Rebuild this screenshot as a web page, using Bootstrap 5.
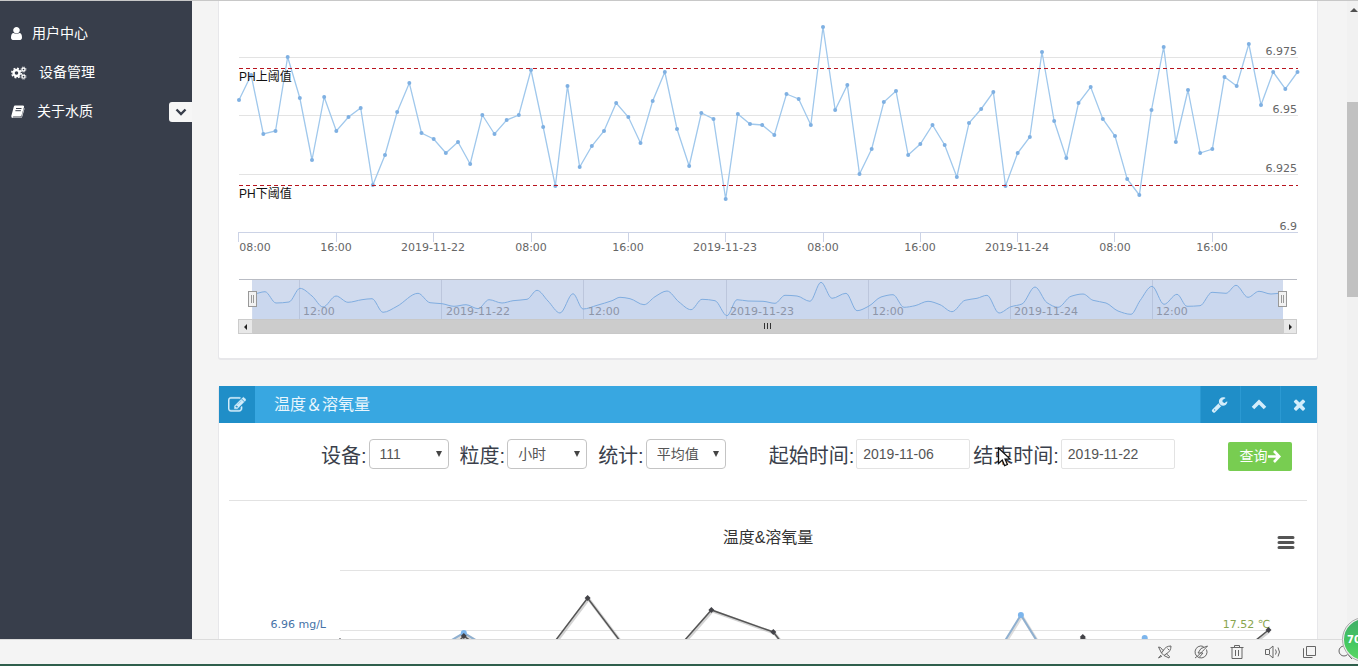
<!DOCTYPE html>
<html lang="zh-CN">
<head>
<meta charset="utf-8">
<meta name="viewport" content="width=device-width, initial-scale=1">
<title>水质监测</title>
<link rel="stylesheet" href="https://cdn.jsdelivr.net/npm/bootstrap@5.3.0/dist/css/bootstrap.min.css">
<style>
  body { font-family: "Liberation Sans", "Noto Sans CJK SC", sans-serif; font-size: 14px; background: #f4f4f4; color: #3a3f4b; border-top: 1px solid #c8c8c8; }
  svg { display: block; }
  .side { width: 192px; background: #383e4b; padding-top: 13px; }
  .side a { height: 39px; padding-left: 11px; gap: 10px; color: #fff; }
  .side-toggle { right: 0; top: 101px; width: 23px; height: 20px; background: #f6f6f6; border-radius: 3px 0 0 3px; color: #383e4b; }
  .pane { padding: 0 29px 0 26px; }
  .panel-box { border: 1px solid #e7e7ea; border-bottom-width: 2px; border-radius: 3px; background: #fff; }
  .panel-first { border-top: 0; border-top-left-radius: 0; border-top-right-radius: 0; margin-bottom: 26px; }
  .panel-bar { height: 37px; background: #38a7e1; color: #e9f6fd; border-radius: 2px 2px 0 0; font-size: 16px; }
  .panel-bar .tile { height: 37px; background: #1f8ec8; color: #d3edfb; }
  .panel-bar .lead-tile { width: 36px; }
  .panel-bar button.tile { width: 40px; padding: 0 3px 0 0; border-left: 1px solid #2b99d2; }
  .panel-bar button.tile:last-child { width: 37px; padding: 0; }
  .panel-title-text { padding-left: 19px; }
  .query { padding: 16px 25px 29px 102px; }
  .query label { font-size: 20px; line-height: 30px; padding: 2px 2px 0 0; white-space: nowrap; }
  .query .form-select { width: 80px; height: 30px; padding: 0 10px; font-size: 14px; color: #555; border-color: #c4c4c4; border-radius: 4px;
    background-image: url("data:image/svg+xml,%3Csvg xmlns='http://www.w3.org/2000/svg' viewBox='0 0 8 8'%3E%3Cpath d='M1 1h6L4 7z' fill='%23444'/%3E%3C/svg%3E"); background-size: 8px 8px; background-position: right 5px center; }
  .query .form-control { width: 114px; height: 30px; padding: 0 6px; font-size: 14px; color: #555; border-color: #e3e3e3; border-radius: 2px; }
  .btn-query { height: 29px; width: 64px; background: #78cd51; color: #fff; border-radius: 2px; font-size: 14px; margin-top: 3px; }
  .gap-wide { margin-left: 43px; }
  .gap-mid { margin-left: 11px; }
  .gap-thin { margin-left: 3px; }
  .rule { height: 1px; background: #e2e2e2; margin: 0 10px; }
  .pointer { left: 24px; top: 8px; }
  .menu-btn { right: 22px; top: 33px; width: 18px; height: 18px; }
  .axis { font: 11px "DejaVu Sans", "Noto Sans CJK SC", sans-serif; fill: #666; }
  .nav-axis { fill: #8d95a8; }
  .limit { font-size: 12px; fill: #111; }
  .scroll-track { width: 11px; background: #f1f1f1; }
  .scroll-thumb { margin-top: 85px; height: 195px; background: #c1c1c1; }
  .status { height: 27px; border-top: 1px solid #dcdcdc; border-bottom: 2px solid #2f5f4c; background: #f4f4f4; padding-right: 5px; gap: 20px; color: #666; }
  .status svg { fill: none; stroke: currentColor; }
  .ball { right: -29px; bottom: 4px; width: 45px; height: 45px; border-radius: 50%; border: 2px solid #eee; outline: 1px solid #aaa; outline-offset: -1px; background: linear-gradient(#3fae68, #45c860 60%, #5bd765); color: #fff; font: bold 10px "DejaVu Sans", sans-serif; padding-left: 3px; }
</style>
</head>
<body class="vh-100 overflow-hidden d-flex flex-column position-relative">
<div class="d-flex flex-grow-1 overflow-hidden">
  <nav class="side flex-shrink-0 position-relative">
    <a href="#" class="d-flex align-items-center text-decoration-none">
      <svg width="11" height="13" viewBox="256 128 1280 1536" preserveAspectRatio="none" fill="currentColor"><path d="M1536 1399q0 109-62.500 187t-150.500 78h-854q-88 0-150.500-78t-62.500-187q0-85 8.500-160.500t31.500-152 58.500-131 94-89 134.500-34.500q131 128 313 128t313-128q76 0 134.500 34.500t94 89 58.500 131 31.500 152 8.500 160.500zm-256-887q0 159-112.500 271.500t-271.500 112.500-271.500-112.500-112.500-271.500 112.500-271.500 271.500-112.500 271.500 112.500 112.500 271.500z"/></svg>
      用户中心</a>
    <a href="#" class="d-flex align-items-center text-decoration-none">
      <svg width="18" height="14" viewBox="1 0 18 14" fill="none" stroke="currentColor"><circle cx="6.500" cy="7" r="3" stroke-width="2.400"/><circle cx="6.500" cy="7" r="4.700" stroke-width="1.600" stroke-dasharray="1.900 1.790"/><circle cx="13.500" cy="3.500" r="1.500" stroke-width="1.300"/><circle cx="13.500" cy="3.500" r="2.500" stroke-width=".9" stroke-dasharray="1 .96"/><circle cx="13.500" cy="10.700" r="1.500" stroke-width="1.300"/><circle cx="13.500" cy="10.700" r="2.500" stroke-width=".9" stroke-dasharray="1 .96"/></svg>
      设备管理</a>
    <a href="#" class="d-flex align-items-center text-decoration-none">
      <svg width="16" height="13" viewBox="0 0 16 13"><path d="M4 .5h8q1.500 0 1 1.500l-2.500 8.500q-.3 1-1.500 1H2.500q-.8 0-.7.500.1.500.9.500h7.600L13.200 3q.5.500.2 1.300L11 12.200q-.3.800-1.200.8H2q-2-.2-1.700-2L2.800 1.800Q3.200.5 4 .5z" fill="#fff"/><path d="M5 3.500h5.500M4.400 5.700h5.500" stroke="#383e4b"/></svg>
      关于水质</a>
    <button type="button" class="side-toggle btn border-0 p-0 position-absolute d-flex align-items-center justify-content-center" aria-label="展开">
      <svg width="12" height="8" viewBox="0 0 12 8" fill="none" stroke="currentColor" stroke-width="2.400"><path d="M1.500 1.500 6 6l4.500-4.500"/></svg>
    </button>
  </nav>

  <main class="pane flex-grow-1 overflow-hidden">
    <section class="panel-box panel-first">
      <svg class="w-100" viewBox="219 1 1098 357" id="ph">
        <path d="M239 57.500H1298M239 115.500H1298M239 174.500H1298" stroke="#e3e3e3"/>
        <path d="M238 232.500H1298M238.500 232v10M336.500 232v10M433.500 232v10M531.500 232v10M628.500 232v10M725.500 232v10M823.500 232v10M920.500 232v10M1017.500 232v10M1114.500 232v10M1212.500 232v10" stroke="#ccd3e6" fill="none"/>
        <g id="phSeries"></g>
        <path d="M239 68.500H1298" stroke="#b8141e" stroke-dasharray="4 3"/>
        <path d="M239 185.500H1298" stroke="#b8141e" stroke-dasharray="4 3"/>
        <text class="limit" x="239" y="81">PH上阈值</text>
        <text class="limit" x="239" y="198">PH下阈值</text>
        <g class="axis" text-anchor="end"><text x="1297" y="55">6.975</text><text x="1297" y="113">6.95</text><text x="1297" y="172">6.925</text><text x="1297" y="230">6.9</text></g>
        <g class="axis" text-anchor="middle"><text x="255" y="251">08:00</text><text x="336" y="251">16:00</text><text x="433" y="251">2019-11-22</text><text x="531" y="251">08:00</text><text x="628" y="251">16:00</text><text x="725" y="251">2019-11-23</text><text x="823" y="251">08:00</text><text x="920" y="251">16:00</text><text x="1017" y="251">2019-11-24</text><text x="1115" y="251">08:00</text><text x="1212" y="251">16:00</text></g>
        <rect x="252" y="280" width="1031" height="39" fill="#d1dbee"/>
        <path d="M299.500 280v39M441.500 280v39M583.500 280v39M726.500 280v39M868.500 280v39M1010.500 280v39M1152.500 280v39" stroke="#bcc6dc"/>
        <g id="navSeries"></g>
        <g class="axis nav-axis"><text x="303" y="315">12:00</text><text x="446" y="315">2019-11-22</text><text x="588" y="315">12:00</text><text x="730" y="315">2019-11-23</text><text x="872" y="315">12:00</text><text x="1014" y="315">2019-11-24</text><text x="1156" y="315">12:00</text></g>
        <path d="M239 279.500H1297" stroke="#b9bcc4"/>
        <rect x="238.500" y="319.500" width="1058" height="14" fill="#ccc" stroke="#c8c8c8"/>
        <rect x="238.500" y="319.500" width="14" height="14" fill="#e8e8e8" stroke="#ccc"/>
        <rect x="1283.500" y="319.500" width="13" height="14" fill="#e8e8e8" stroke="#ccc"/>
        <path d="M247 324v6l-3-3zM1289 324v6l3-3z" fill="#222"/>
        <path d="M764.500 323v6M767.500 323v6M770.500 323v6" stroke="#333"/>
        <g fill="#f2f2f2" stroke="#999"><rect x="248.500" y="291.500" width="8" height="15"/><rect x="1278.500" y="291.500" width="8" height="15"/><path d="M251.500 295v8M253.500 295v8M1281.500 295v8M1283.500 295v8"/></g>
      </svg>
    </section>

    <section class="panel-box border-top-0">
      <div class="panel-bar d-flex align-items-center">
        <span class="tile lead-tile d-flex align-items-center justify-content-center">
          <svg width="18" height="18" viewBox="0 0 1792 1792" fill="currentColor" stroke="currentColor" stroke-width="40"><path d="M888 1184l116-116-152-152-116 116v56h96v96h56zm440-720q-16-16-33 1l-350 350q-17 17-1 33t33-1l350-350q17-17 1-33zm80 594v190q0 119-84.500 203.500t-203.500 84.500h-832q-119 0-203.500-84.500t-84.500-203.500v-832q0-119 84.500-203.500t203.500-84.500h832q63 0 117 25 15 7 18 23 3 17-9 29l-49 49q-14 14-32 8-23-6-45-6h-832q-66 0-113 47t-47 113v832q0 66 47 113t113 47h832q66 0 113-47t47-113v-126q0-13 9-22l64-64q15-15 35-7t20 29zm-96-738l288 288-672 672h-288v-288zm444 132l-92 92-288-288 92-92q28-28 68-28t68 28l152 152q28 28 28 68t-28 68z"/></svg>
        </span>
        <span class="panel-title-text me-auto">温度＆溶氧量</span>
        <button type="button" class="tile btn border-top-0 border-end-0 border-bottom-0 rounded-0 d-flex align-items-center justify-content-center" aria-label="设置"><svg width="17" height="17" viewBox="0 0 1792 1792" fill="currentColor"><path d="M448 1472q0-26-19-45t-45-19-45 19-19 45 19 45 45 19 45-19 19-45zm644-420l-682 682q-37 37-90 37-52 0-91-37l-106-108q-38-36-38-90 0-53 38-91l681-681q39 98 114.500 173.500t173.500 114.500zm634-435q0 39-23 106-47 134-164.500 217.500t-258.500 83.500q-185 0-316.500-131.500t-131.500-316.500 131.500-316.500 316.500-131.500q58 0 121.500 16.500t107.500 46.500q16 11 16 28t-16 28l-293 169v224l193 107q5-3 79-48.500t135.500-81 70.500-35.500q15 0 23.500 10t8.500 25z"/></svg></button>
        <button type="button" class="tile btn border-top-0 border-end-0 border-bottom-0 rounded-0 d-flex align-items-center justify-content-center" aria-label="收起"><svg width="16" height="11" viewBox="0 0 16 11" fill="none" stroke="currentColor" stroke-width="3.600"><path d="M2 9l6-6 6 6"/></svg></button>
        <button type="button" class="tile btn border-top-0 border-end-0 border-bottom-0 rounded-0 d-flex align-items-center justify-content-center" aria-label="关闭"><svg width="17" height="17" viewBox="0 0 1792 1792" fill="currentColor"><path d="M1490 1322q0 40-28 68l-136 136q-28 28-68 28t-68-28l-294-294-294 294q-28 28-68 28t-68-28l-136-136q-28-28-28-68t28-68l294-294-294-294q-28-28-28-68t28-68l136-136q28-28 68-28t68 28l294 294 294-294q28-28 68-28t68 28l136 136q28 28 28 68t-28 68l-294 294 294 294q28 28 28 68z"/></svg></button>
      </div>
      <form class="query d-flex align-items-start" onsubmit="return false">
        <label for="dev">设备:</label>
        <select id="dev" class="form-select"><option>111</option></select>
        <label for="gran" class="gap-mid">粒度:</label>
        <select id="gran" class="form-select"><option>小时</option></select>
        <label for="stat" class="gap-mid">统计:</label>
        <select id="stat" class="form-select"><option>平均值</option></select>
        <label for="from" class="gap-wide">起始时间:</label>
        <input id="from" class="form-control" type="text" value="2019-11-06">
        <label for="to" class="gap-thin position-relative">结束时间:
          <svg class="pointer position-absolute" width="15" height="20" viewBox="0 0 15 20"><path d="M1.500 1v15.500l3.800-3.400 2.300 5.600 2.800-1.200-2.300-5.400h5z" fill="#fff" stroke="#111" stroke-width="1.300"/></svg>
        </label>
        <input id="to" class="form-control" type="text" value="2019-11-22">
        <button type="submit" class="btn btn-query border-0 p-0 ms-auto d-flex align-items-center justify-content-center">查询<svg width="13" height="13" viewBox="0 0 13 13" fill="none" stroke="currentColor" stroke-width="2.600"><path d="M0 6.500h11M6 1l5.300 5.500L6 12"/></svg></button>
      </form>
      <div class="rule"></div>
      <div class="position-relative">
        <svg class="w-100" viewBox="219 501 1098 160">
          <path d="M340 570.500H1270M340 630.500H1270" stroke="#e3e3e3"/>
          <text x="768" y="543" text-anchor="middle" font-size="16" fill="#333">温度&amp;溶氧量</text>
          <text class="axis" x="326" y="628" text-anchor="end" style="fill:#4572a7">6.96 mg/L</text>
          <text class="axis" x="1270" y="628" text-anchor="end" style="fill:#89a54e">17.52 ℃</text>
          <g id="mixSeries"></g>
        </svg>
        <button type="button" class="menu-btn btn border-0 p-0 position-absolute" aria-label="图表菜单"><svg width="18" height="18" viewBox="0 0 18 18" stroke="#555" stroke-width="3" stroke-linecap="round"><path d="M2 3.500h14M2 8.500h14M2 13.500h14"/></svg></button>
      </div>
    </section>
  </main>

  <div class="scroll-track flex-shrink-0">
    <svg width="11" height="16" viewBox="0 0 11 16"><path d="M3 11h8L7 7z" fill="#505050"/></svg>
    <div class="scroll-thumb"></div>
  </div>
</div>

<footer class="status flex-shrink-0 d-flex align-items-center justify-content-end">
  <svg width="16" height="16" viewBox="0 0 16 16"><path d="M14 2Q8.500 2 6 7L4.500 9l2.500 2.500L9 10q5-2.500 5-8zM6 6.500 3.500 3.500 1.500 3 4.500 9M9.500 10l3 2.500-.5 1.500L7 11.500M4 11l-2.500 3L5 12M10.500 4.500l1.500 1.500"/></svg>
  <svg width="16" height="16" viewBox="0 0 16 16"><path d="M13.500 5.500A6 6 0 1 1 10.500 2.500M2 14C5 12 10 7 14.500 2L8 4.500 5 9h5l-3.500 4"/></svg>
  <svg width="16" height="16" viewBox="0 0 16 16"><path d="M1.500 3.500h13M5.500 3.500v-2h5v2M3 3.500v11h10v-11M6.500 6v6M9.500 6v6"/></svg>
  <svg width="16" height="16" viewBox="0 0 16 16"><path d="M.5 5.500H4L8 2v12l-4-3.500H.5zM4.500 6v4M10.500 5.500q1.700 2.500 0 5M13 3.500q3 4.500 0 9"/></svg>
  <svg width="16" height="16" viewBox="0 0 16 16"><path d="M5.500 2.500h9v9h-9zM3 4.500H2.500v9h9"/></svg>
  <svg width="16" height="16" viewBox="0 0 16 16"><circle cx="7" cy="7" r="5"/><path d="M11 11l4 4"/></svg>
</footer>
<div class="ball position-absolute d-flex align-items-center">70</div>

<script src="https://cdn.jsdelivr.net/npm/bootstrap@5.3.0/dist/js/bootstrap.bundle.min.js"></script>
<script>
  // hourly PH readings, in chart units
  const ph = [100,75,134,131,57,98,160,97,131,117,108,185,155,112,83,133,139,153,142,164,115,134,120,115,70,127,186,86,167,146,131,103,117,143,101,72,129,166,113,119,199,114,124,125,135,94,99,125,27,110,85,174,149,102,91,155,144,125,145,177,123,109,92,186,153,137,52,121,158,103,87,119,136,179,195,110,47,142,90,153,149,77,86,44,105,72,89,72]
    .map((y, i) => [239 + 1058.5 * i / 87, y]);
  const line = p => 'M' + p.map(q => q.join(' ')).join('L');
  const put = (id, html) => { document.getElementById(id).innerHTML = html; };
  put('phSeries', `<path d="${line(ph)}" fill="none" stroke="#a0c8ec" stroke-width="1.300"/>` +
    ph.map(q => `<circle cx="${q[0]}" cy="${q[1]}" r="2" fill="#7fb0e2"/>`).join(''));

  // overview curve: flat tangents at the peaks, averaged slopes elsewhere
  const nav = [[253,294],[265,291.7],[276,303],[289,302],[300,288.3],[312,296],[323,307],[336,296],[348,302.3],[362,299.7],[372,298.7],[383,312.3],[397,306.3],[418,293.3],[430,302.7],[442,303.7],[454,306.3],[466,304.7],[478,308.7],[489,299.7],[502,303],[513,300.7],[527,299.3],[537,290.3],[548,301],[560,313],[573,293.7],[583,309],[597,305.3],[612,300.7],[620,297.3],[630,298.7],[644,304.7],[655,296.7],[667,291],[679,302],[691,309.7],[702,299.3],[715,300.7],[727,315.7],[737,299.7],[748,301],[763,301.3],[775,303.3],[785,295.3],[797,296],[810,301.3],[821,282.3],[832,298.3],[846,293.3],[857,310.7],[869,306],[881,297],[893,294.7],[904,307.3],[915,305.7],[928,301.3],[940,304.7],[952,311.7],[965,300.3],[977,298.3],[987,295.3],[999,313],[1011,306.7],[1022,304],[1035,287],[1047,302.7],[1058,307.3],[1071,296.3],[1083,294],[1093,300.3],[1106,303],[1118,311],[1131,314.3],[1140,300.7],[1152,286.3],[1164,304.3],[1177,294.3],[1187,306.3],[1200,305.7],[1212,292.3],[1226,293.3],[1236,285.3],[1248,297.3],[1259,291.3],[1271,294],[1283,293]];
  const slope = nav.map((q, i) => {
    if (!i || i === nav.length - 1) return 0;
    const a = (q[1] - nav[i-1][1]) / (q[0] - nav[i-1][0]), b = (nav[i+1][1] - q[1]) / (nav[i+1][0] - q[0]);
    return a * b <= 0 ? 0 : 2 * a * b / (a + b);
  });
  let d = 'M' + nav[0];
  for (let i = 1; i < nav.length; i++) {
    const p = nav[i-1], q = nav[i], h = (q[0] - p[0]) / 3;
    d += `C${p[0] + h} ${p[1] + slope[i-1] * h} ${q[0] - h} ${q[1] - slope[i] * h} ${q[0]} ${q[1]}`;
  }
  put('navSeries', `<path d="${d}V319H253Z" fill="#7cb5ec" fill-opacity=".08"/><path d="${d}" fill="none" stroke="#80ade0"/>`);

  // dissolved oxygen (blue) and temperature (dark)
  const place = (y, i) => [340 + 61.9 * i, y];
  const oxy = [690,669,633,670,690,700,700,700,700,700,715,615,715,638,700,690].map(place);
  const temp = [641,700,636,680,598,680,610,632,712,700,700,700,637,700,680,630].map(place);
  put('mixSeries',
    `<g fill="none"><path d="${line(oxy)}" stroke="#bbb" stroke-width="3" opacity=".5" transform="translate(1 1)"/><path d="${line(oxy)}" stroke="#8fb0d0" stroke-width="2"/>` +
    `<path d="${line(temp)}" stroke="#aaa" stroke-width="3" opacity=".5" transform="translate(1 1)"/><path d="${line(temp)}" stroke="#555" stroke-width="1.500"/></g>` +
    oxy.map(q => `<circle cx="${q[0]}" cy="${q[1]}" r="3" fill="#7cb5ec"/>`).join('') +
    temp.map(q => `<path d="M${q[0]} ${q[1] - 3}l3 3-3 3-3-3z" fill="#434348"/>`).join(''));
</script>
</body>
</html>
